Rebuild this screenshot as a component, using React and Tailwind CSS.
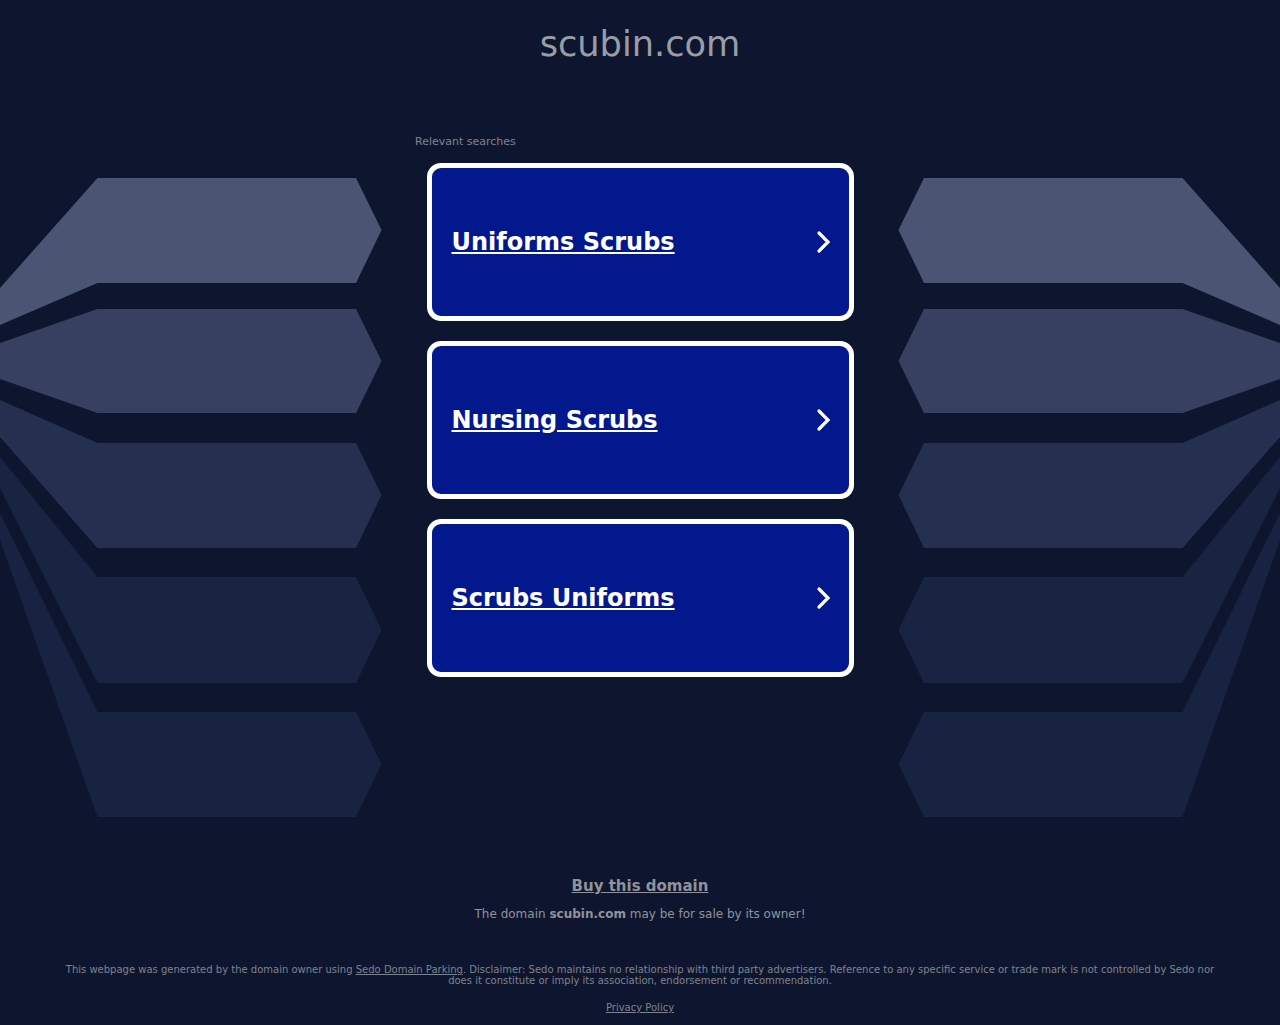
import React from "react";

const font = { fontFamily: '"DejaVu Sans", sans-serif' };

const shapes = [
  { fill: "#4a5573", points: "0,288 97.5,178 356,178 381.5,230 356,283 97.5,283 0,325" },
  { fill: "#374060", points: "0,343 97.5,309 356,309 381.5,361 356,413 97.5,413 0,379" },
  { fill: "#252f4f", points: "0,400 97.5,443 356,443 381.5,495 356,548 97.5,548 0,437" },
  { fill: "#192342", points: "0,457 97.5,577 356,577 381.5,630 356,683 97.5,683 0,488" },
  { fill: "#182341", points: "0,513 97.5,712 356,712 381.5,764 356,817 97.5,817 0,540" },
];

const links = ["Uniforms Scrubs", "Nursing Scrubs", "Scrubs Uniforms"];

const Backdrop = () => (
  <svg className="absolute inset-0" width="1280" height="1025" viewBox="0 0 1280 1025">
    <g>
      {shapes.map((s) => (
        <polygon key={s.fill} fill={s.fill} points={s.points} />
      ))}
    </g>
    <g transform="translate(1280 0) scale(-1 1)">
      {shapes.map((s) => (
        <polygon key={s.fill} fill={s.fill} points={s.points} />
      ))}
    </g>
  </svg>
);

const Chevron = () => (
  <svg width="16" height="24" viewBox="0 0 16 24" fill="none" stroke="#fff" strokeWidth="3.2" strokeLinecap="round" strokeLinejoin="miter">
    <path d="M3 3 L12 12 L3 21" />
  </svg>
);

const App = () => {
  return (
    <div className="relative h-[1025px] overflow-hidden bg-[#0e162f]" style={font}>
      <Backdrop />
      <div className="relative flex flex-col items-center">
        <h1 className="pt-[23px] text-[35.2px] leading-[42px] font-normal text-[#999da5]">scubin.com</h1>

        <div className="mt-[70px] w-[450px]">
          <p className="text-[11px] leading-[13px] text-[#7f838c]">Relevant searches</p>
          <ul className="mt-[15px] flex flex-col items-center gap-[20px]">
            {links.map((label) => (
              <li key={label}>
                <a
                  href="#"
                  className="flex h-[158px] w-[427px] items-center justify-between rounded-[14px] border-[5px] border-white bg-[#02188c] pl-[20px] pr-[17px] text-white"
                >
                  <span className="text-2xl leading-[31px] font-bold underline">{label}</span>
                  <Chevron />
                </a>
              </li>
            ))}
          </ul>
        </div>

        <a href="#" className="mt-[200px] text-[15px] leading-[19px] font-bold text-[#8f939b] underline">
          Buy this domain
        </a>
        <p className="mt-[11px] text-xs leading-[14px] text-[#8f939b]">
          The domain <strong className="font-bold">scubin.com</strong> may be for sale by its owner!
        </p>

        <p className="mt-[43px] w-[1160px] text-center text-[10px] leading-[11px] text-[#7f838c]">
          This webpage was generated by the domain owner using{" "}
          <a href="#" className="underline">Sedo Domain Parking</a>. Disclaimer: Sedo maintains no relationship with third party advertisers. Reference to any specific service or trade mark is not controlled by Sedo nor does it constitute or imply its association, endorsement or recommendation.
        </p>
        <a href="#" className="mt-[16px] text-[10px] leading-[12px] text-[#7f838c] underline">
          Privacy Policy
        </a>
      </div>
    </div>
  );
};

export default App;
